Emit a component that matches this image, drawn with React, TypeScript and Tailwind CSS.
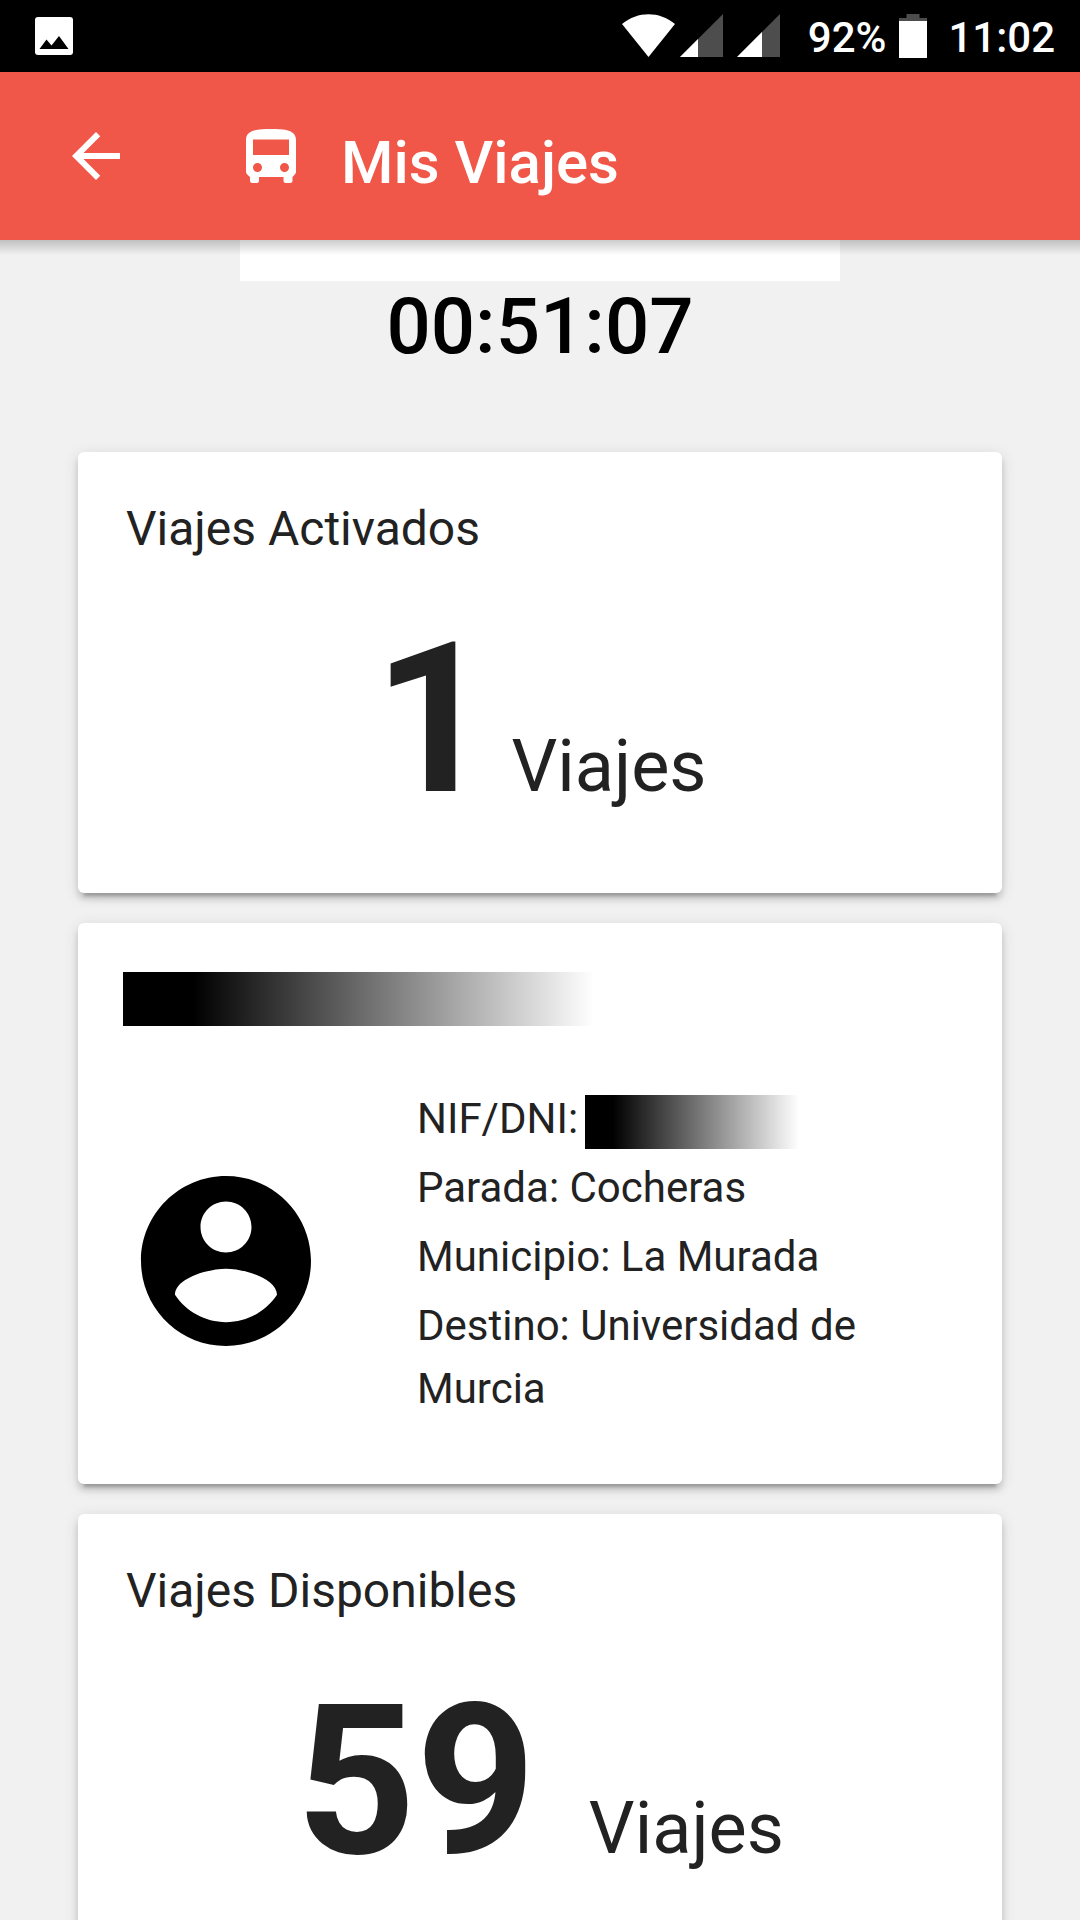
import type { ReactNode } from "react";

const StatusBar = () => (
  <div className="flex h-[72px] items-center bg-black pl-[35px] pr-[24px] text-white">
    <svg className="h-[38px] w-[38px]" viewBox="0 0 38 38">
      <rect width="38" height="38" rx="3" fill="#fff" />
      <path d="M4.500 32 11.500 22.500 16.500 28.500 24 19 33.500 32z" fill="#000" />
    </svg>
    <svg className="ml-auto h-[44px] w-[158px]" viewBox="0 0 158 44">
      <path d="M0 10C16-3 37-3 53 10L26.500 43z" fill="#fff" />
      <path d="M58 43H101V0z" fill="#4d4d4d" />
      <path d="M58 43H76V25z" fill="#fff" />
      <path d="M115 43H158V0z" fill="#4d4d4d" />
      <path d="M115 43H140V18z" fill="#fff" />
    </svg>
    <span className="ml-[28px] pt-[3px] text-[42px] font-medium leading-[72px]">92%</span>
    <svg className="ml-[13px] h-[44px] w-[28px]" viewBox="0 0 28 44">
      <path d="M0 4H7.500V0H20.500V4H28V8H0z" fill="#4d4d4d" />
      <path d="M0 7H28V44H0z" fill="#fff" />
    </svg>
    <span className="ml-[21px] mr-px pt-[3px] text-[42px] font-medium leading-[72px]">11:02</span>
  </div>
);

const Header = () => (
  <header className="relative z-10 flex h-[168px] items-center bg-[#f05748] pl-[60px] text-white">
    <svg className="h-[72px] w-[72px]" viewBox="0 0 24 24" fill="currentColor">
      <path d="M20 11H7.830l5.590-5.590L12 4l-8 8 8 8 1.410-1.410L7.830 13H20v-2z" />
    </svg>
    <svg className="ml-[114px] h-[54px] w-[50px]" viewBox="0 0 50 54" fill="currentColor" fillRule="evenodd">
      <path d="M0 43V11C0 1 11 0 25 0S50 1 50 11V43C50 45 48 46 46.500 48V51.500Q46.500 54 44 54H40Q37.500 54 37.500 51.500V48H13V51.500Q13 54 10.500 54H6.500Q4 54 4 51.500V48C2 46 0 45 0 43zM7 10.500V26H43V10.500zM11.500 34a4.500 4.500 0 1 0 0 9 4.500 4.500 0 1 0 0-9zM38.500 34a4.500 4.500 0 1 0 0 9 4.500 4.500 0 1 0 0-9z" />
    </svg>
    <h1 className="ml-[45px] mt-[14px] text-[60px] font-medium leading-[72px]">Mis Viajes</h1>
    {/* Toolbar shadow */}
    <div className="absolute left-0 top-full h-[15px] w-full bg-linear-to-b/srgb from-black/20 to-transparent" />
  </header>
);

const Card = ({ children, className = "" }: { children: ReactNode; className?: string }) => (
  <section
    className={`w-[924px] rounded-[6px] bg-white shadow-[0_6px_6px_0_rgba(0,0,0,0.14),0_9px_3px_-6px_rgba(0,0,0,0.2),0_3px_15px_0_rgba(0,0,0,0.12)] ${className}`}
  >
    {children}
  </section>
);

const TripsCard = ({ title, count, gap }: { title: string; count: number; gap: string }) => (
  <Card className="h-[441px] pt-[49px]">
    <h2 className="pl-[48px] text-[48px] leading-[56px]">{title}</h2>
    <div className="mt-[40px] flex items-baseline justify-center leading-[246px]">
      <span className="text-[209px] font-bold">{count}</span>
      <span className={`text-[72px] ${gap}`}>Viajes</span>
    </div>
  </Card>
);

const ProfileCard = () => (
  <Card className="h-[561px] pl-[45px] pt-[49px]">
    <div className="h-[54px] w-[471px] bg-linear-to-r/srgb from-black from-15% to-white" />
    <div className="mt-[61px] flex">
      <svg className="ml-px mt-[72px] h-[204px] w-[204px]" viewBox="0 0 24 24">
        <path d="M12 2C6.480 2 2 6.480 2 12s4.480 10 10 10 10-4.480 10-10S17.520 2 12 2zm0 3c1.660 0 3 1.340 3 3s-1.340 3-3 3-3-1.340-3-3 1.340-3 3-3zm0 14.200c-2.500 0-4.710-1.280-6-3.220.03-1.990 4-3.080 6-3.080 1.990 0 5.970 1.090 6 3.080-1.290 1.940-3.500 3.220-6 3.220z" />
      </svg>
      <div className="ml-[89px] w-[480px] text-[42px] leading-[63px]">
        <div className="flex h-[69px]">
          <span>NIF/DNI:</span>
          <span className="ml-[7px] mt-[8px] h-[54px] w-[214px] bg-linear-to-r/srgb from-black from-13% to-white" />
        </div>
        <p className="mb-[6px]">Parada: Cocheras</p>
        <p className="mb-[6px]">Municipio: La Murada</p>
        <p>Destino: Universidad de Murcia</p>
      </div>
    </div>
  </Card>
);

export default function App() {
  return (
    <div className="h-[1920px] w-[1080px] overflow-hidden bg-[#f1f1f1] font-['Roboto',sans-serif] text-[#222]">
      <StatusBar />
      <Header />
      <main className="flex flex-col items-center">
        <div className="h-[41px] w-[600px] bg-white" />
        <div className="mt-px text-[78px] font-medium leading-[90px] text-black">00:51:07</div>
        <div className="mt-[80px] flex flex-col gap-[30px]">
          <TripsCard title="Viajes Activados" count={1} gap="ml-[18px]" />
          <ProfileCard />
          <TripsCard title="Viajes Disponibles" count={59} gap="ml-[53px]" />
        </div>
      </main>
    </div>
  );
}
